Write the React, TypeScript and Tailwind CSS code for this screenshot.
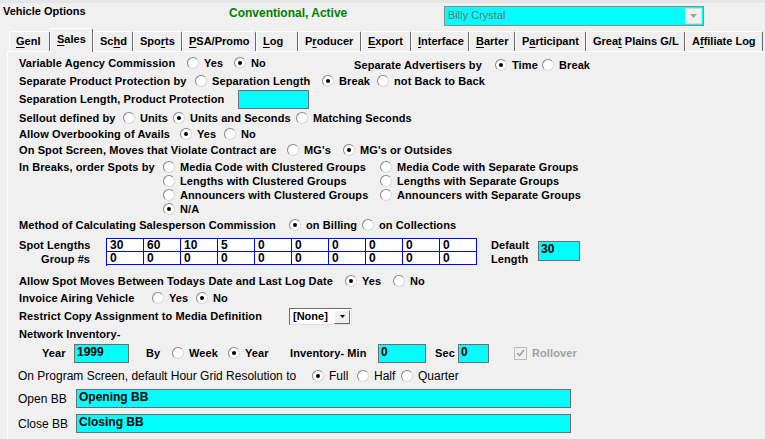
import React from 'react';

const narrow = "font-['Liberation_Sans',Arial,sans-serif] tracking-normal";

function Dot({ on }: { on?: boolean }) {
  return (
    <span className="relative inline-block w-[12px] h-[12px] shrink-0 rounded-full bg-white border border-t-[#868686] border-l-[#868686] border-r-[#d8d8d8] border-b-[#d8d8d8]">
      {on && <span className="absolute left-[3px] top-[3px] w-[4px] h-[4px] rounded-full bg-black" />}
    </span>
  );
}

function Radio({ label, on, w = '' }: { label: string; on?: boolean; w?: string }) {
  return (
    <span className={`flex items-center shrink-0 ${w}`}>
      <Dot on={on} />
      <span className="ml-[5px] whitespace-nowrap">{label}</span>
    </span>
  );
}

function Label({ children, w = '' }: { children: React.ReactNode; w?: string }) {
  return <span className={`shrink-0 whitespace-nowrap ${w}`}>{children}</span>;
}

function Cyan({ value = '', w, h = 'h-[19px]' }: { value?: string; w: string; h?: string }) {
  return (
    <div
      className={`shrink-0 ${w} ${h} bg-[#00ffff] border border-[#6e6e6e] pl-[2px] ${narrow} text-[12px] font-bold leading-[15px] tracking-[-0.2px]`}
    >
      {value}
    </div>
  );
}

const tabs: Array<[string, number, number]> = [
  ['Genl', 0, 41],
  ['Sales', 0, 43],
  ['Schd', 2, 40],
  ['Sports', 3, 49],
  ['PSA/Promo', 0, 74],
  ['Log', 0, 42],
  ['Producer', 1, 63],
  ['Export', 0, 50],
  ['Interface', 0, 58],
  ['Barter', 0, 46],
  ['Participant', 1, 71],
  ['Great Plains G/L', 4, 99],
  ['Affiliate Log', 1, 78],
];

const tabWidths: Record<number, string> = {
  41: 'w-[41px]',
  43: 'w-[43px]',
  40: 'w-[40px]',
  49: 'w-[49px]',
  74: 'w-[74px]',
  42: 'w-[42px]',
  63: 'w-[63px]',
  50: 'w-[50px]',
  58: 'w-[58px]',
  46: 'w-[46px]',
  71: 'w-[71px]',
  99: 'w-[99px]',
  78: 'w-[78px]',
};

function Tab({ label, u, width, active }: { label: string; u: number; width: number; active?: boolean }) {
  const base = `shrink-0 ${tabWidths[width]} flex items-center pl-[6px] whitespace-pre bg-[#f0f0f0] border-t border-l border-white border-r border-r-[#696969] rounded-t-[2px]`;
  return (
    <div className={active ? `${base} h-[24px] -mb-px pb-[2px]` : `${base} h-[20px]`}>
      <span>
        {label.slice(0, u)}
        <span className="underline underline-offset-[2px]">{label[u]}</span>
        {label.slice(u + 1)}
      </span>
    </div>
  );
}

const spots = ['30', '60', '10', '5', '0', '0', '0', '0', '0', '0'];
const groups = ['0', '0', '0', '0', '0', '0', '0', '0', '0', '0'];

function GridRow({ vals }: { vals: string[] }) {
  return (
    <div className="flex">
      {vals.map((v, i) => (
        <div
          key={i}
          className={`w-[37px] h-[13px] border-r border-b border-[#0000ff] bg-white pl-[3px] ${narrow} text-[12px] leading-[12px] tracking-[-0.6px]`}
        >
          {v}
        </div>
      ))}
    </div>
  );
}

export default function App() {
  return (
    <div className="w-[765px] h-[439px] bg-[#f0f0f0] overflow-hidden font-['Liberation_Sans',Arial,sans-serif] text-[11px] font-bold tracking-[0.1px] text-black">
      {/* header */}
      <div className="flex h-[28px] border-t-[3px] border-[#e6e6e6]">
        <span className="w-[226px] ml-[3px] mt-[2px] leading-[13px] tracking-normal">Vehicle Options</span>
        <span className="w-[215px] mt-[3px] text-[12px] leading-[14px] tracking-normal text-[#008000]">
          Conventional, Active
        </span>
        <div className="w-[260px] h-[20px] mt-[3px] flex bg-[#00ffff] border border-[#8c8c8c]">
          <span className={`flex-1 pl-[3px] ${narrow} text-[11px] font-normal leading-[17px] tracking-[-0.3px] text-[#6f6f6f]`}>
            Billy Crystal
          </span>
          <span className="w-[17px] h-[16px] mt-px mr-px bg-[#f0f0f0] border border-[#d9d9d9] flex items-center justify-center">
            <svg width="7" height="4" viewBox="0 0 7 4">
              <path d="M0 0h7L3.5 4z" fill="#a0a0a0" />
            </svg>
          </span>
        </div>
      </div>

      {/* tabs */}
      <div className="relative z-10 flex items-end h-[23px] pl-[9px] tracking-normal">
        {tabs.map(([l, u, w]) => (
          <Tab key={l} label={l} u={u} width={w} active={l === 'Sales'} />
        ))}
      </div>

      {/* panel */}
      <div className="ml-[7px] h-[388px] border-l border-t border-white pl-[11px]">
        <div className="flex items-center h-[22px]">
          <Label w="w-[168px]">Variable Agency Commission</Label>
          <Radio w="w-[47px]" label="Yes" />
          <Radio w="w-[120px]" label="No" on />
          <div className="flex items-center mt-[4px]">
            <Label w="w-[141px]">Separate Advertisers by</Label>
            <Radio w="w-[47px]" label="Time" on />
            <Radio label="Break" />
          </div>
        </div>

        <div className="flex items-center h-[14px]">
          <Label w="w-[176px]">Separate Product Protection by</Label>
          <Radio w="w-[127px]" label="Separation Length" />
          <Radio w="w-[55px]" label="Break" on />
          <Radio label="not Back to Back" />
        </div>

        <div className="flex items-center h-[22px]">
          <Label w="w-[219px]">Separation Length, Product Protection</Label>
          <Cyan w="w-[71px]" />
        </div>

        <div className="flex items-center h-[16px]">
          <Label w="w-[104px]">Sellout defined by</Label>
          <Radio w="w-[50px]" label="Units" />
          <Radio w="w-[123px]" label="Units and Seconds" on />
          <Radio label="Matching Seconds" />
        </div>

        <div className="flex items-center h-[16px]">
          <Label w="w-[161px]">Allow Overbooking of Avails</Label>
          <Radio w="w-[44px]" label="Yes" on />
          <Radio label="No" />
        </div>

        <div className="flex items-center h-[16px]">
          <Label w="w-[268px]">On Spot Screen, Moves that Violate Contract are</Label>
          <Radio w="w-[56px]" label="MG's" />
          <Radio label="MG's or Outsides" on />
        </div>

        <div className="flex mt-[2px]">
          <span className="w-[144px] h-[14px] flex items-center shrink-0">In Breaks, order Spots by</span>
          <div className="grid grid-cols-[217px_auto] auto-rows-[14px]">
            <Radio label="Media Code with Clustered Groups" />
            <Radio label="Media Code with Separate Groups" />
            <Radio label="Lengths with Clustered Groups" />
            <Radio label="Lengths with Separate Groups" />
            <Radio label="Announcers with Clustered Groups" />
            <Radio label="Announcers with Separate Groups" />
            <Radio label="N/A" on />
          </div>
        </div>

        <div className="flex items-center h-[18px]">
          <Label w="w-[270px]">Method of Calculating Salesperson Commission</Label>
          <Radio w="w-[73px]" label="on Billing" on />
          <Radio label="on Collections" />
        </div>

        <div className="flex mt-[4px]">
          <div className="w-[87px] shrink-0 leading-[14px]">
            <div className="h-[14px] flex items-center">Spot Lengths</div>
            <div className="h-[13px] flex items-center pl-[22px]">Group #s</div>
          </div>
          <div className="border-l border-t border-[#0000ff]">
            <GridRow vals={spots} />
            <GridRow vals={groups} />
          </div>
          <div className="ml-[14px] w-[47px] leading-[14px]">
            <div>Default</div>
            <div>Length</div>
          </div>
          <div className="mt-[3px]">
            <Cyan w="w-[42px]" h="h-[20px]" value="30" />
          </div>
        </div>

        <div className="flex items-center h-[16px] mt-[7px]">
          <Label w="w-[326px]">Allow Spot Moves Between Todays Date and Last Log Date</Label>
          <Radio w="w-[48px]" label="Yes" on />
          <Radio label="No" />
        </div>

        <div className="flex items-center h-[18px]">
          <Label w="w-[133px]">Invoice Airing Vehicle</Label>
          <Radio w="w-[44px]" label="Yes" />
          <Radio label="No" on />
        </div>

        <div className="flex items-center h-[18px]">
          <Label w="w-[270px]">Restrict Copy Assignment to Media Definition</Label>
          <div className="w-[63px] h-[17px] flex bg-white border border-t-[#6d6d6d] border-l-[#6d6d6d] border-r-[#e0e0e0] border-b-[#e0e0e0]">
            <span className={`flex-1 pl-[3px] ${narrow} text-[11px] font-bold leading-[14px]`}>[None]</span>
            <span className="w-[16px] h-[14px] mt-px mr-px bg-[#f0f0f0] border border-t-white border-l-white border-r-[#696969] border-b-[#696969] flex items-center justify-center">
              <svg width="5" height="3" viewBox="0 0 5 3">
                <path d="M0 0h5L2.5 3z" fill="#000" />
              </svg>
            </span>
          </div>
        </div>

        <div className="flex items-center h-[18px]">Network Inventory-</div>

        <div className="flex items-center h-[20px] pl-[23px]">
          <Label w="w-[32px]">Year</Label>
          <Cyan w="w-[55px]" value="1999" />
          <span className="ml-[17px] w-[26px] shrink-0">By</span>
          <Radio w="w-[56px]" label="Week" />
          <Radio w="w-[62px]" label="Year" on />
          <Label w="w-[88px]">Inventory- Min</Label>
          <Cyan w="w-[48px]" value="0" />
          <span className="ml-[9px] w-[23px] shrink-0">Sec</span>
          <Cyan w="w-[31px]" value="0" />
          <span className="ml-[25px] w-[13px] h-[13px] shrink-0 border border-[#bcbcbc] bg-[#f0f0f0] flex items-center justify-center">
            <svg width="9" height="8" viewBox="0 0 9 8">
              <path d="M1 4l2.5 2.5L8 1" stroke="#a0a0a0" strokeWidth="1.6" fill="none" />
            </svg>
          </span>
          <span className="ml-[5px] text-[#a0a0a0]">Rollover</span>
        </div>

        <div className={`flex items-center h-[26px] -ml-px ${narrow} font-normal text-[12px]`}>
          <Label w="w-[294px]">On Program Screen, default Hour Grid Resolution to</Label>
          <Radio w="w-[45px]" label="Full" on />
          <Radio w="w-[44px]" label="Half" />
          <Radio label="Quarter" />
        </div>

        <div className={`flex items-center -ml-px ${narrow} font-normal text-[12px]`}>
          <Label w="w-[58px]">Open BB</Label>
          <Cyan w="w-[495px]" value="Opening BB" />
        </div>

        <div className={`flex items-center -ml-px mt-[6px] ${narrow} font-normal text-[12px]`}>
          <Label w="w-[58px]">Close BB</Label>
          <Cyan w="w-[495px]" value="Closing BB" />
        </div>
      </div>
    </div>
  );
}
